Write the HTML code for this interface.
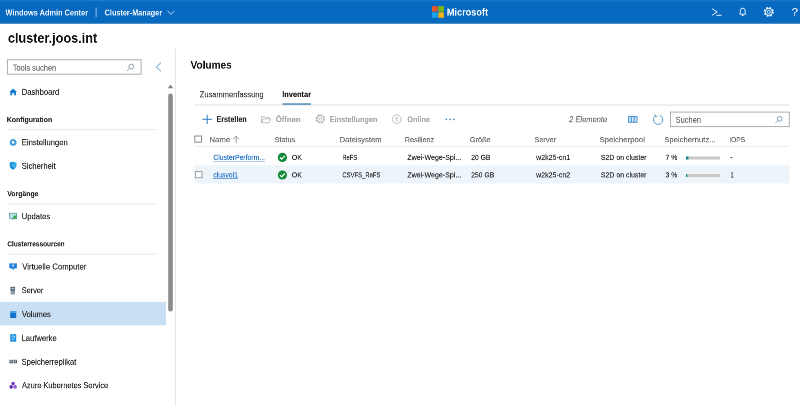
<!DOCTYPE html>
<html lang="de">
<head>
<meta charset="utf-8">
<title>Windows Admin Center</title>
<style>
html,body{margin:0;padding:0;background:#fff;}
body{width:800px;height:406px;overflow:hidden;position:relative;font-family:"Liberation Sans",sans-serif;color:#222;font-size:8px;}
#bg{position:absolute;left:0;top:0;display:block;}
.t{position:absolute;left:0;top:0;white-space:nowrap;line-height:1;transform-origin:0 0;will-change:transform;-webkit-text-stroke:0.3px currentColor;}
</style>
</head>
<body>
<svg id="bg" width="800" height="406" viewBox="0 0 800 406">
<!-- header bar -->
<rect x="0" y="0" width="800" height="23.5" fill="#0869c1"/>
<rect x="0" y="0" width="800" height="1.4" fill="#1c76c8"/>
<rect x="0" y="22.3" width="800" height="1.2" fill="#166db8"/>
<rect x="95.6" y="7.5" width="1" height="9.5" fill="#8fc0ea"/>
<path d="M167.6 10.8 L171 14.4 L174.4 10.8" fill="none" stroke="#cfe4f6" stroke-width="0.9"/>

<!-- Microsoft logo -->
<rect x="432" y="6.1" width="5.6" height="5.5" fill="#e8532a"/>
<rect x="438.3" y="6.1" width="5.6" height="5.5" fill="#7db713"/>
<rect x="432" y="12.3" width="5.6" height="5.5" fill="#1ba3ea"/>
<rect x="438.3" y="12.3" width="5.6" height="5.5" fill="#f7b616"/>

<!-- header icons -->
<g transform="translate(710,6)"><path d="M2.1 2.7 L7.2 6 L2.1 9.3 M6.4 9.3 H11.5" fill="none" stroke="#eaf4ff" stroke-width="1"/></g>
<g transform="translate(737,5.6)"><path d="M2.6 8.6 C3.4 7.8 3.2 6.6 3.3 5.2 A2.4 2.6 0 0 1 8.1 5.2 C8.2 6.6 8 7.8 8.8 8.6 Z" fill="none" stroke="#eaf4ff" stroke-width="1"/><path d="M4.8 9.9 H6.6" stroke="#eaf4ff" stroke-width="1"/></g>
<g transform="translate(762.8,5.9)"><circle cx="6" cy="6" r="4.1" fill="none" stroke="#eaf4ff" stroke-width="1.7" stroke-dasharray="1.9 1.32"/><circle cx="6" cy="6" r="3.5" fill="none" stroke="#eaf4ff" stroke-width="1"/><circle cx="6" cy="6" r="1.5" fill="none" stroke="#eaf4ff" stroke-width="0.9"/></g>

<!-- sidebar search -->
<rect x="7.4" y="59.8" width="133.7" height="14.4" fill="#fff" stroke="#adadad" stroke-width="1"/>
<g transform="translate(126,63)"><circle cx="5.3" cy="3.6" r="2.5" fill="none" stroke="#7d8a96" stroke-width="0.8"/><path d="M3.5 5.4 L1 8" stroke="#7d8a96" stroke-width="0.8"/></g>
<path d="M160.9 62.7 L156.3 67 L160.9 71.3" fill="none" stroke="#3a8bd2" stroke-width="0.9"/>

<!-- sidebar border + scrollbar -->
<rect x="174.9" y="49" width="1" height="357" fill="#e4e4e4"/>
<rect x="168.2" y="93.6" width="4.6" height="218" rx="2.3" fill="#8b8b8b"/>
<path d="M167.9 88.2 L170.5 84.8 L173.1 88.2 Z" fill="#7a7a7a"/>

<!-- sidebar selected -->
<rect x="0" y="301.9" width="166" height="23.4" fill="#c9e0f4"/>

<!-- sidebar section rules -->
<rect x="7" y="129.2" width="149.5" height="1" fill="#e6e6e6"/>
<rect x="7" y="203.4" width="149.5" height="1" fill="#e6e6e6"/>
<rect x="7" y="253.6" width="149.5" height="1" fill="#e6e6e6"/>

<!-- nav icons -->
<path d="M13.15 88.4 L17 92 H16 V95.3 H14 V93.1 H12.3 V95.3 H10.3 V92 H9.3 Z" fill="#1a7bd0"/>
<circle cx="13.1" cy="142.4" r="2.3" fill="none" stroke="#3b9bdc" stroke-width="1.8"/>
<circle cx="13.1" cy="142.4" r="3.2" fill="none" stroke="#3b9bdc" stroke-width="0.8" stroke-dasharray="1.2 1.31"/>
<path d="M13.15 161.7 L16.5 162.8 V165.6 C16.5 167.4 15.1 168.9 13.15 169.7 C11.2 168.9 9.8 167.4 9.8 165.6 V162.8 Z" fill="#2aa9e6"/>
<path d="M13.15 161.7 L9.8 162.8 V165.6 C9.8 167.4 11.2 168.9 13.15 169.7 Z" fill="#1b8fd6"/>
<path d="M12.2 164.3 L14.4 166.9" stroke="#8fd6f5" stroke-width="1" fill="none"/>
<rect x="9.6" y="213.3" width="6.9" height="5" fill="#bfe3e6" stroke="#5aa2ad" stroke-width="0.9"/>
<rect x="11.6" y="218.6" width="3" height="0.9" fill="#6b9aa5"/>
<rect x="13.4" y="215.6" width="3.4" height="3.1" fill="#35a84a"/>
<rect x="9.3" y="263.4" width="7.6" height="4.9" fill="#1f80d6"/>
<path d="M11.4 268.3 H14.8 L13.1 269.9 Z" fill="#1f80d6"/>
<rect x="12.1" y="264.6" width="2" height="1.9" fill="#cbe6fa"/>
<rect x="10.6" y="286.9" width="4.4" height="7.6" fill="#8f9aa3"/>
<rect x="10.6" y="286.9" width="4.4" height="3.9" fill="#4f5d6a"/>
<rect x="11.5" y="287.8" width="2.6" height="1.5" fill="#b5d4ee"/>
<rect x="10.2" y="311.3" width="6" height="6.7" fill="#1173c8"/>
<rect x="10.2" y="311.3" width="6" height="1.7" fill="#4fa8ea"/>
<rect x="10.2" y="334.1" width="6" height="7.6" fill="#1f93e3"/>
<path d="M11.7 336.6 Q13.3 335 14.7 336.6 Q13.2 338.2 12.4 340.2" fill="none" stroke="#d9eefc" stroke-width="0.9"/>
<rect x="9.4" y="359.8" width="3.5" height="3.5" fill="#5d6974"/>
<rect x="13.5" y="359.8" width="3.5" height="3.5" fill="#5d6974"/>
<rect x="10.5" y="360.6" width="1.2" height="1.5" fill="#bcd8ee"/>
<rect x="14.6" y="360.6" width="1.2" height="1.5" fill="#bcd8ee"/>
<circle cx="13.15" cy="383.6" r="1.8" fill="#7a3fc6"/>
<circle cx="11.2" cy="386.9" r="1.8" fill="#6430b0"/>
<circle cx="15.1" cy="386.9" r="1.8" fill="#8d58d4"/>

<!-- tabs -->
<rect x="194.6" y="104.3" width="594.8" height="1.4" fill="#e8e8e8"/>
<rect x="282.4" y="103.4" width="28.6" height="1.3" fill="#2f79ad"/>

<!-- toolbar -->
<path d="M207.2 114.6 V124 M202.3 119.3 H212.2" stroke="#2474c0" stroke-width="0.95" fill="none"/>
<g transform="translate(260.6,114.4)"><path d="M1 8.4 V2.1 H4 L5 3.1 H8.4 V4.4 M1 8.4 L2.8 4.4 H10.2 L8.4 8.4 Z" fill="none" stroke="#adadad" stroke-width="0.8"/></g>
<g transform="translate(315.3,113.9)"><circle cx="5" cy="5" r="4" fill="none" stroke="#adadad" stroke-width="1.4" stroke-dasharray="1.7 1.44"/><circle cx="5" cy="5" r="3.4" fill="none" stroke="#adadad" stroke-width="0.8"/><circle cx="5" cy="5" r="1.4" fill="none" stroke="#adadad" stroke-width="0.7"/></g>
<g transform="translate(391.8,114.2)"><circle cx="5" cy="5" r="4.3" fill="none" stroke="#adadad" stroke-width="0.8"/><path d="M5 7.4 V3 M3.4 4.5 L5 2.9 L6.6 4.5" fill="none" stroke="#adadad" stroke-width="0.8"/></g>
<circle cx="446.4" cy="119.4" r="0.8" fill="#3a80b8"/>
<circle cx="450.1" cy="119.4" r="0.8" fill="#3a80b8"/>
<circle cx="453.8" cy="119.4" r="0.8" fill="#3a80b8"/>
<g transform="translate(628,114.6)"><rect x="0.6" y="1.9" width="8.4" height="5.8" fill="#cfe5f7" stroke="#3a8cd0" stroke-width="0.9"/><path d="M3.4 1.9 V7.7 M6.2 1.9 V7.7" stroke="#3a8cd0" stroke-width="0.9"/></g>
<g transform="translate(652,113.8)"><path d="M7.6 1.5 A4.7 4.7 0 1 1 3.4 2.1" fill="none" stroke="#4a8fc0" stroke-width="0.9"/><path d="M3.2 0.5 V2.6 H5.3" fill="none" stroke="#4a8fc0" stroke-width="0.9"/></g>
<rect x="670.5" y="112.1" width="118.8" height="14.5" fill="#fff" stroke="#adadad" stroke-width="1"/>
<g transform="translate(774.4,115.4)"><circle cx="5.3" cy="3.4" r="2.4" fill="none" stroke="#6f8aa3" stroke-width="0.8"/><path d="M3.6 5.1 L1 7.6" stroke="#6f8aa3" stroke-width="0.8"/></g>

<!-- table header -->
<rect x="194.8" y="136" width="6.7" height="6.2" fill="#fff" stroke="#8a8a8a" stroke-width="1"/>
<path d="M236.2 143.2 V136.2 M233.2 139.2 L236.2 136.2 L239.2 139.2" fill="none" stroke="#808080" stroke-width="0.8"/>
<rect x="194.6" y="145.9" width="594.8" height="1.2" fill="#eeeeee"/>

<!-- row 2 background + checkbox -->
<rect x="194.6" y="165.3" width="594.8" height="18.1" fill="#edf4fa"/>
<rect x="195.4" y="171.6" width="6.6" height="6.1" fill="#fff" stroke="#9a9a9a" stroke-width="1"/>

<!-- status icons -->
<circle cx="282.4" cy="157.4" r="4.6" fill="#13893a"/>
<path d="M280 157.5 L281.7 159.2 L284.8 155.9" fill="none" stroke="#fff" stroke-width="1.2"/>
<circle cx="282.4" cy="175" r="4.6" fill="#13893a"/>
<path d="M280 175.1 L281.7 176.8 L284.8 173.5" fill="none" stroke="#fff" stroke-width="1.2"/>

<!-- usage bars -->
<rect x="686" y="156.5" width="34.2" height="3" fill="#c8c8c8"/>
<rect x="686" y="156.5" width="2.4" height="3" fill="#0f8a8a"/>
<rect x="686" y="174.1" width="34.2" height="3" fill="#c8c8c8"/>
<rect x="686" y="174.1" width="1.3" height="3" fill="#0f8a8a"/>
</svg>

<div class="t" style="font-size:16.4px;font-weight:bold;-webkit-text-stroke:0;color:#f4faff;transform:translate(5.50px,8.50px) scale(0.4503,0.5000);">Windows Admin Center</div>
<div class="t" style="font-size:16.4px;font-weight:bold;-webkit-text-stroke:0;color:#f4faff;transform:translate(104.70px,8.50px) scale(0.4431,0.5000);">Cluster-Manager</div>
<div class="t" style="font-size:19.6px;font-weight:bold;-webkit-text-stroke:0;color:#fff;transform:translate(446.83px,7.55px) scale(0.4667,0.5000);">Microsoft</div>
<div class="t" style="font-size:22.6px;-webkit-text-stroke:0.2px currentColor;color:#eef6ff;transform:translate(791.70px,6.60px) scale(0.5000,0.5000);">?</div>
<div class="t" style="font-size:28px;font-weight:bold;-webkit-text-stroke:0;color:#111;transform:translate(7.95px,31.20px) scale(0.4513,0.5000);">cluster.joos.int</div>
<div class="t" style="font-size:16.2px;color:#6a6a6a;transform:translate(12.80px,63.60px) scale(0.4585,0.5000);">Tools suchen</div>
<div class="t" style="font-size:16.2px;color:#262626;transform:translate(21.73px,87.80px) scale(0.4731,0.5000);">Dashboard</div>
<div class="t" style="font-size:15.4px;font-weight:bold;-webkit-text-stroke:0.2px currentColor;color:#262626;transform:translate(6.85px,115.60px) scale(0.4495,0.5000);">Konfiguration</div>
<div class="t" style="font-size:16.2px;color:#262626;transform:translate(21.73px,138.20px) scale(0.4729,0.5000);">Einstellungen</div>
<div class="t" style="font-size:16.2px;color:#262626;transform:translate(21.73px,161.80px) scale(0.4704,0.5000);">Sicherheit</div>
<div class="t" style="font-size:15.4px;font-weight:bold;-webkit-text-stroke:0.2px currentColor;color:#262626;transform:translate(7.30px,189.80px) scale(0.4457,0.5000);">Vorgänge</div>
<div class="t" style="font-size:16.2px;color:#262626;transform:translate(21.73px,212.20px) scale(0.4712,0.5000);">Updates</div>
<div class="t" style="font-size:15.4px;font-weight:bold;-webkit-text-stroke:0.2px currentColor;color:#262626;transform:translate(7.30px,239.90px) scale(0.4222,0.5000);">Clusterressourcen</div>
<div class="t" style="font-size:16.2px;color:#262626;transform:translate(22.20px,262.50px) scale(0.4799,0.5000);">Virtuelle Computer</div>
<div class="t" style="font-size:16.2px;color:#262626;transform:translate(21.75px,286.20px) scale(0.4532,0.5000);">Server</div>
<div class="t" style="font-size:16.2px;color:#262626;transform:translate(22.00px,310.10px) scale(0.4629,0.5000);">Volumes</div>
<div class="t" style="font-size:16.2px;color:#262626;transform:translate(21.53px,334.00px) scale(0.4712,0.5000);">Laufwerke</div>
<div class="t" style="font-size:16.2px;color:#262626;transform:translate(21.53px,357.70px) scale(0.4722,0.5000);">Speicherreplikat</div>
<div class="t" style="font-size:16.2px;color:#262626;transform:translate(22.00px,381.20px) scale(0.4580,0.5000);">Azure Kubernetes Service</div>
<div class="t" style="font-size:22px;font-weight:bold;-webkit-text-stroke:0;color:#111;transform:translate(190.50px,59.60px) scale(0.4584,0.5000);">Volumes</div>
<div class="t" style="font-size:16.2px;color:#3c3c3c;transform:translate(199.70px,90.30px) scale(0.4642,0.5000);">Zusammenfassung</div>
<div class="t" style="font-size:16.2px;font-weight:bold;-webkit-text-stroke:0.2px currentColor;color:#111;transform:translate(282.14px,90.10px) scale(0.4581,0.5000);">Inventar</div>
<div class="t" style="font-size:16.2px;font-weight:bold;-webkit-text-stroke:0.2px currentColor;color:#222;transform:translate(216.46px,115.00px) scale(0.4418,0.5000);">Erstellen</div>
<div class="t" style="font-size:16.2px;font-weight:bold;-webkit-text-stroke:0.2px currentColor;color:#a6a6a6;transform:translate(275.80px,115.20px) scale(0.4750,0.5000);">Öffnen</div>
<div class="t" style="font-size:16.2px;font-weight:bold;-webkit-text-stroke:0.2px currentColor;color:#a6a6a6;transform:translate(329.85px,115.20px) scale(0.4476,0.5000);">Einstellungen</div>
<div class="t" style="font-size:16.2px;font-weight:bold;-webkit-text-stroke:0.2px currentColor;color:#a6a6a6;transform:translate(407.30px,115.20px) scale(0.4500,0.5000);">Online</div>
<div class="t" style="font-size:16.2px;font-style:italic;color:#6a6a6a;transform:translate(569.10px,115.20px) scale(0.4634,0.5000);">2 Elemente</div>
<div class="t" style="font-size:16.2px;color:#6a6a6a;transform:translate(675.64px,115.70px) scale(0.4604,0.5000);">Suchen</div>
<div class="t" style="font-size:15.4px;color:#686868;transform:translate(209.50px,135.70px) scale(0.5025,0.5000);">Name</div>
<div class="t" style="font-size:15.4px;color:#686868;transform:translate(274.63px,135.70px) scale(0.4674,0.5000);">Status</div>
<div class="t" style="font-size:15.4px;color:#686868;transform:translate(339.60px,135.70px) scale(0.4964,0.5000);">Dateisystem</div>
<div class="t" style="font-size:15.4px;color:#686868;transform:translate(404.83px,135.70px) scale(0.4689,0.5000);">Resilienz</div>
<div class="t" style="font-size:15.4px;color:#686868;transform:translate(469.82px,135.70px) scale(0.4762,0.5000);">Größe</div>
<div class="t" style="font-size:15.4px;color:#686868;transform:translate(534.42px,135.70px) scale(0.4756,0.5000);">Server</div>
<div class="t" style="font-size:15.4px;color:#686868;transform:translate(599.39px,135.70px) scale(0.5068,0.5000);">Speicherpool</div>
<div class="t" style="font-size:15.4px;color:#686868;transform:translate(664.20px,135.70px) scale(0.5010,0.5000);">Speichernutz...</div>
<div class="t" style="font-size:15.4px;color:#686868;transform:translate(729.27px,135.70px) scale(0.4286,0.5000);">IOPS</div>
<div class="t" style="font-size:15.4px;-webkit-text-stroke:0.3px currentColor;text-decoration:underline;text-decoration-thickness:1.2px;text-underline-offset:1.6px;color:#1f70c4;transform:translate(213.30px,153.35px) scale(0.4444,0.5000);">ClusterPerform...</div>
<div class="t" style="font-size:15.4px;color:#262626;transform:translate(291.75px,153.35px) scale(0.4524,0.5000);">OK</div>
<div class="t" style="font-size:15.4px;color:#262626;transform:translate(342.32px,153.35px) scale(0.3763,0.5000);">ReFS</div>
<div class="t" style="font-size:15.4px;color:#262626;transform:translate(407.30px,153.35px) scale(0.4573,0.5000);">Zwei-Wege-Spi...</div>
<div class="t" style="font-size:15.4px;color:#262626;transform:translate(471.16px,153.35px) scale(0.4405,0.5000);">20 GB</div>
<div class="t" style="font-size:15.4px;color:#262626;transform:translate(536.10px,153.35px) scale(0.4581,0.5000);">w2k25-cn1</div>
<div class="t" style="font-size:15.4px;color:#262626;transform:translate(600.85px,153.35px) scale(0.4520,0.5000);">S2D on cluster</div>
<div class="t" style="font-size:15.4px;color:#262626;transform:translate(665.45px,153.35px) scale(0.4520,0.5000);">7 %</div>
<div class="t" style="font-size:15.4px;color:#262626;transform:translate(730.30px,153.35px) scale(0.4400,0.5000);">-</div>
<div class="t" style="font-size:15.4px;-webkit-text-stroke:0.3px currentColor;text-decoration:underline;text-decoration-thickness:1.2px;text-underline-offset:1.6px;color:#1f70c4;transform:translate(213.30px,170.90px) scale(0.4429,0.5000);">clusvol1</div>
<div class="t" style="font-size:15.4px;color:#262626;transform:translate(291.75px,170.90px) scale(0.4524,0.5000);">OK</div>
<div class="t" style="font-size:15.4px;color:#262626;transform:translate(342.32px,170.90px) scale(0.3837,0.5000);">CSVFS_ReFS</div>
<div class="t" style="font-size:15.4px;color:#262626;transform:translate(407.30px,170.90px) scale(0.4573,0.5000);">Zwei-Wege-Spi...</div>
<div class="t" style="font-size:15.4px;color:#262626;transform:translate(471.16px,170.90px) scale(0.4431,0.5000);">250 GB</div>
<div class="t" style="font-size:15.4px;color:#262626;transform:translate(536.10px,170.90px) scale(0.4581,0.5000);">w2k25-cn2</div>
<div class="t" style="font-size:15.4px;color:#262626;transform:translate(600.85px,170.90px) scale(0.4520,0.5000);">S2D on cluster</div>
<div class="t" style="font-size:15.4px;color:#262626;transform:translate(665.45px,170.90px) scale(0.4520,0.5000);">3 %</div>
<div class="t" style="font-size:15.4px;color:#262626;transform:translate(730.30px,170.90px) scale(0.4000,0.5000);">1</div>
</body>
</html>
